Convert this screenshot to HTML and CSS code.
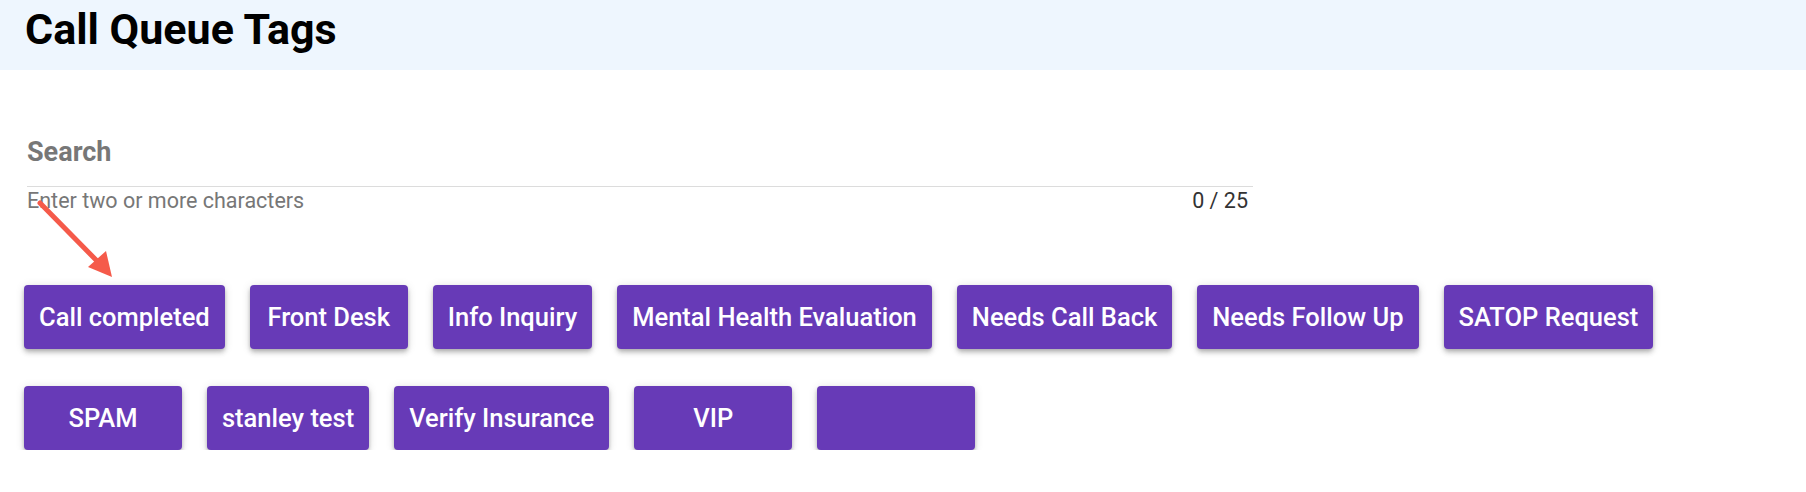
FILE: index.html
```html
<!DOCTYPE html>
<html lang="en">
<head>
<meta charset="utf-8">
<title>Call Queue Tags</title>
<link rel="stylesheet" href="styles.css">
</head>
<body>
<header class="page-header">
  <h1 class="page-title">Call Queue Tags</h1>
</header>
<main class="content">
  <div class="search-field">
    <label class="search-label" for="search">Search</label>
    <div class="search-input-wrap">
      <input id="search" class="search-input" type="text" maxlength="25">
    </div>
    <div class="search-helper">
      <span class="helper-text">Enter two or more characters</span>
      <span class="helper-count">0 / 25</span>
    </div>
  </div>
  <div class="tag-list">
    <button class="tag-btn">Call completed</button>
    <button class="tag-btn">Front Desk</button>
    <button class="tag-btn">Info Inquiry</button>
    <button class="tag-btn">Mental Health Evaluation</button>
    <button class="tag-btn">Needs Call Back</button>
    <button class="tag-btn">Needs Follow Up</button>
    <button class="tag-btn">SATOP Request</button>
    <button class="tag-btn">SPAM</button>
    <button class="tag-btn">stanley test</button>
    <button class="tag-btn">Verify Insurance</button>
    <button class="tag-btn">VIP</button>
    <button class="tag-btn"></button>
  </div>
</main>
<svg class="annotation-arrow" width="130" height="290" viewBox="0 0 130 290" aria-hidden="true">
  <line x1="40" y1="203" x2="100" y2="264" stroke="#F55A4A" stroke-width="5" stroke-linecap="round"/>
  <polygon points="112,277 88,267 106,251" fill="#F55A4A"/>
</svg>
</body>
</html>
```
FILE: styles.css
```css
* { box-sizing: border-box; }
html, body {
  margin: 0;
  padding: 0;
  background: #ffffff;
  font-family: Roboto, "Liberation Sans", Arial, sans-serif;
}
body { position: relative; }

.page-header {
  height: 70px;
  background: #EEF6FE;
  padding: 8px 0 0 25px;
}
.page-title {
  margin: 0;
  font-size: 43px;
  line-height: 1;
  font-weight: 700;
  color: #000;
}

.content {
  padding: 0 24px;
}

.search-field {
  width: 1226px;
  margin-left: 3px;
  padding-top: 66px;
}
.search-label {
  display: block;
  font-size: 27px;
  line-height: 32px;
  font-weight: 700;
  color: #777777;
}
.search-input-wrap {
  height: 19px;
  border-bottom: 1px solid #DCDCDC;
}
.search-input {
  display: block;
  width: 100%;
  height: 18px;
  border: 0;
  padding: 0;
  outline: none;
  background: transparent;
  font: inherit;
}
.search-helper {
  display: flex;
  justify-content: space-between;
  margin-top: 1px;
  font-size: 21.5px;
  line-height: 26px;
}
.helper-text { color: #777777; }
.helper-count { color: #333333; padding-right: 5px; }

.tag-list {
  display: flex;
  flex-wrap: wrap;
  column-gap: 25px;
  row-gap: 37px;
  margin-top: 71px;
}
.tag-btn {
  height: 64px;
  min-width: 158px;
  padding: 0 15px;
  border: 0;
  border-radius: 4px;
  background: #673AB7;
  color: #ffffff;
  font-family: Roboto, "Liberation Sans", Arial, sans-serif;
  font-size: 25.5px;
  font-weight: 500;
  box-shadow: 0 2px 4px -1px rgba(0,0,0,.2), 0 4px 5px 0 rgba(0,0,0,.14), 0 1px 10px 0 rgba(0,0,0,.12);
  cursor: pointer;
}

.annotation-arrow {
  position: absolute;
  left: 0;
  top: 0;
  pointer-events: none;
}
```
